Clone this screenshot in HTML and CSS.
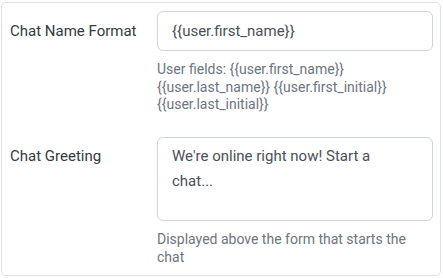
FILE: index.html
```html
<!DOCTYPE html>
<html>
<head>
<meta charset="utf-8">
<link rel="stylesheet" href="styles.css">
</head>
<body>
<div class="card">
  <div class="row">
    <label class="label">Chat Name Format</label>
    <div class="field">
      <div class="input">{{user.first_name}}</div>
      <div class="help">User fields: {{user.first_name}} {{user.last_name}} {{user.first_initial}} {{user.last_initial}}</div>
    </div>
  </div>
  <div class="row">
    <label class="label">Chat Greeting</label>
    <div class="field">
      <div class="textarea">We're online right now! Start a chat...</div>
      <div class="help">Displayed above the form that starts the chat</div>
    </div>
  </div>
</div>
</body>
</html>
```
FILE: styles.css
```css
html, body {
  margin: 0;
  padding: 0;
  background: #fff;
}
body {
  font-family: Roboto, "Liberation Sans", sans-serif;
  padding: 2px 2px 0 1px;
}
.card {
  border: 1px solid #dcdfe3;
  border-radius: 5px;
  padding: 8px 7px 9px 8px;
  display: flex;
  flex-direction: column;
  gap: 23.5px;
  box-sizing: border-box;
  width: 440px;
  height: 274px;
}
.row {
  display: grid;
  grid-template-columns: 147px 1fr;
}
.label {
  font-size: 15px;
  color: #343a40;
  line-height: 40px;
  height: 40px;
}
.row:nth-child(2) .label {
  line-height: 38px;
}
.input {
  border: 1px solid #ced4da;
  border-radius: 6px;
  height: 40px;
  box-sizing: border-box;
  padding: 0 14px;
  font-size: 15px;
  line-height: 38px;
  color: #495057;
}
.textarea {
  border: 1px solid #ced4da;
  border-radius: 6px;
  height: 84px;
  box-sizing: border-box;
  padding: 6px 24px 6px 14px;
  font-size: 15px;
  line-height: 25px;
  color: #495057;
}
.help {
  margin-top: 10px;
  font-size: 14px;
  line-height: 17.5px;
  color: #6c757d;
}
```
